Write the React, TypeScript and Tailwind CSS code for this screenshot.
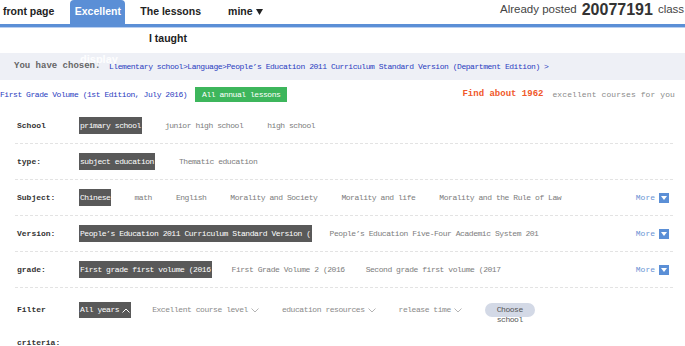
import { ReactNode } from "react";

const mono = "font-['Liberation_Mono',monospace]";

function Chevron({ up = false, light = false }: { up?: boolean; light?: boolean }) {
  return (
    <svg
      width="8"
      height="5"
      viewBox="0 0 8 5"
      className="ml-[3px] inline-block"
      fill="none"
      stroke={light ? "#ffffff" : "#b5b5b5"}
      strokeWidth="1"
    >
      {up ? <polyline points="0.5,4.5 4,1 7.5,4.5" /> : <polyline points="0.5,0.5 4,4 7.5,0.5" />}
    </svg>
  );
}

function MoreButton() {
  return (
    <div className="ml-auto flex items-center gap-[4px] pr-[4px]">
      <span className="text-[#6a93d4]">More</span>
      <span className="flex h-[10px] w-[10px] items-center justify-center bg-[#5b8fd6]">
        <svg width="6" height="4" viewBox="0 0 6 4">
          <polygon points="0,0 6,0 3,4" fill="#ffffff" />
        </svg>
      </span>
    </div>
  );
}

function Opt({ children, active = false }: { children: ReactNode; active?: boolean }) {
  return (
    <span
      className={`flex h-[17px] items-center whitespace-nowrap px-[1px] ${
        active ? "bg-[#595959] text-white" : "text-[#7c7c7c]"
      }`}
    >
      {children}
    </span>
  );
}

interface Row {
  label: string;
  gap: string;
  options: string[];
  more?: boolean;
}

const rows: Row[] = [
  { label: "School", gap: "gap-[22px]", options: ["primary school", "junior high school", "high school"] },
  { label: "type:", gap: "gap-[23px]", options: ["subject education", "Thematic education"] },
  {
    label: "Subject:",
    gap: "gap-[22px]",
    more: true,
    options: [
      "Chinese",
      "math",
      "English",
      "Morality and Society",
      "Morality and life",
      "Morality and the Rule of Law",
    ],
  },
  {
    label: "Version:",
    gap: "gap-[17px]",
    more: true,
    options: [
      "People\u2019s Education 2011 Curriculum Standard Version (",
      "People\u2019s Education Five-Four Academic System 201",
    ],
  },
  {
    label: "grade:",
    gap: "gap-[19px]",
    more: true,
    options: ["First grade first volume (2016", "First Grade Volume 2 (2016", "Second grade first volume (2017"],
  },
];

export default function App() {
  return (
    <div className="h-[346px] w-[685px] overflow-hidden bg-white">
      {/* Top nav */}
      <div className="flex h-[27px] border-b-[3px] border-[#5b8fd6] font-['Liberation_Sans',Arial,sans-serif] shadow-[0_1px_0_#b9cff0]">
        <div className="flex w-[500px] shrink-0 items-center text-[10.5px] font-bold text-[#222]">
          <span className="ml-[3px]">front page</span>
          <span className="ml-[16px] flex h-full w-[55px] items-center justify-center rounded-t-[4px] bg-[#5b8fd6] text-white">
            Excellent
          </span>
          <span className="ml-[15px]">The lessons</span>
          <span className="ml-[27px] flex items-center">
            mine
            <svg width="7" height="6" viewBox="0 0 7 6" className="ml-[3px]">
              <polygon points="0,0 7,0 3.5,6" fill="#222" />
            </svg>
          </span>
        </div>
        <div className="flex items-center whitespace-nowrap pb-[4px] text-[11.5px] text-[#444]">
          <span>Already posted</span>
          <span className="ml-[5px] text-[16px] font-bold text-[#333]">20077191</span>
          <span className="ml-[5px]">class</span>
        </div>
      </div>

      {/* Submenu */}
      <div className="h-[26px] pl-[149px] pt-[4px] font-['Liberation_Sans',Arial,sans-serif] text-[10.5px] font-bold text-[#222]">
        I taught
      </div>

      {/* Breadcrumb */}
      <div className={`relative flex h-[27px] items-center whitespace-nowrap bg-[#eef0f6] pl-[14px] ${mono}`}>
        <span className="w-[95px] shrink-0 text-[9px] font-bold text-[#666]">You have chosen:</span>
        <span className="text-[8px] tracking-[-0.45px] text-[#2a3cc0]">
          Llementary school&gt;Language&gt;People&rsquo;s Education 2011 Curriculum Standard Version (Department
          Edition) &gt;
        </span>
        <span className="absolute left-[80px] top-[-2px] font-['Liberation_Sans',Arial,sans-serif] text-[11px] font-bold text-white/90">
          display
        </span>
      </div>

      {/* Result line */}
      <div className={`mt-[7px] flex h-[15px] items-center whitespace-nowrap pr-[10px] ${mono}`}>
        <span className="text-[8px] tracking-[-0.45px] text-[#2a3cc0]">First Grade Volume (1st Edition, July 2016)</span>
        <span className="ml-[8px] flex h-[15px] items-center bg-[#3db65c] px-[7px] text-[8px] tracking-[-0.45px] text-white">
          All annual lessons
        </span>
        <span className="ml-auto text-[9px] font-bold text-[#f0582a]">Find about 1962</span>
        <span className="ml-[9px] text-[8px] tracking-[0.1px] text-[#8a8a8a]">excellent courses for you</span>
      </div>

      {/* Filters */}
      <div className={`mx-[15px] mt-[6px] w-[658px] ${mono} text-[8px]`}>
        {rows.map((row) => (
          <div
            key={row.label}
            className="flex h-[36px] items-center whitespace-nowrap border-b border-dashed border-[#e3e3e3] pl-[2px]"
          >
            <span className="w-[62px] shrink-0 font-bold text-[#333]">{row.label}</span>
            <div className={`flex items-center tracking-[-0.45px] ${row.gap}`}>
              {row.options.map((o, i) => (
                <Opt key={o} active={i === 0}>
                  {o}
                </Opt>
              ))}
            </div>
            {row.more && <MoreButton />}
          </div>
        ))}

        <div className="flex items-start whitespace-nowrap pl-[2px] pt-[14px]">
          <div className="w-[62px] shrink-0 font-bold text-[#333]">
            <div className="leading-[16px]">Filter</div>
            <div className="mt-[17px] leading-[16px]">criteria:</div>
          </div>
          <div className="flex items-center tracking-[-0.45px] text-[#8a8a8a]">
            <span className="flex h-[16px] items-center bg-[#595959] px-[1px] text-white">
              All years
              <Chevron up light />
            </span>
            <span className="ml-[21px] flex items-center">
              Excellent course level
              <Chevron />
            </span>
            <span className="ml-[23px] flex items-center">
              education resources
              <Chevron />
            </span>
            <span className="ml-[23px] flex items-center">
              release time
              <Chevron />
            </span>
            <div className="ml-[23px] h-[14px] w-[50px] rounded-full bg-[#d3d9e6] pt-[2px] text-center leading-[9.5px] whitespace-normal text-[#555]">
              Choose school
            </div>
          </div>
        </div>
      </div>
    </div>
  );
}
